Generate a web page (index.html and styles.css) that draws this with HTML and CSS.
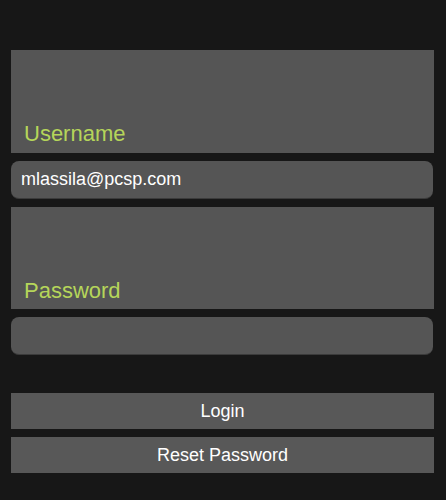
FILE: index.html
```html
<!DOCTYPE html>
<html>
<head>
<meta charset="utf-8">
<link rel="stylesheet" href="styles.css">
</head>
<body>
<form class="login">
  <div class="label-box"><span class="label">Username</span></div>
  <div class="field">mlassila@pcsp.com</div>
  <div class="label-box label-box-short"><span class="label">Password</span></div>
  <div class="field"></div>
  <div class="buttons">
    <div class="btn">Login</div>
    <div class="btn">Reset Password</div>
  </div>
</form>
</body>
</html>
```
FILE: styles.css
```css
html, body {
  margin: 0;
  padding: 0;
  background: #171717;
  height: 100%;
}
body {
  font-family: "Liberation Sans", Arial, sans-serif;
}
.login {
  display: flex;
  flex-direction: column;
  gap: 8px;
  padding: 50px 12px 0 11px;
}
.label-box {
  height: 103px;
  background: #555555;
  display: flex;
  align-items: flex-end;
  padding: 0 0 7px 13px;
  box-sizing: border-box;
}
.label-box-short {
  height: 102px;
  padding-bottom: 6px;
}
.label {
  color: #b5d55a;
  font-size: 22px;
  line-height: 25px;
}
.field {
  height: 38px;
  box-sizing: border-box;
  background: #555555;
  border-radius: 8px;
  border-bottom: 1px solid #3b3b3b;
  margin-right: 1px;
  color: #ffffff;
  font-size: 18px;
  display: flex;
  align-items: center;
  padding: 0 9px 0 10px;
}
.buttons {
  display: flex;
  flex-direction: column;
  gap: 8px;
  margin-top: 30px;
}
.btn {
  height: 36px;
  background: #585858;
  color: #ffffff;
  font-size: 18px;
  display: flex;
  align-items: center;
  justify-content: center;
}
```
